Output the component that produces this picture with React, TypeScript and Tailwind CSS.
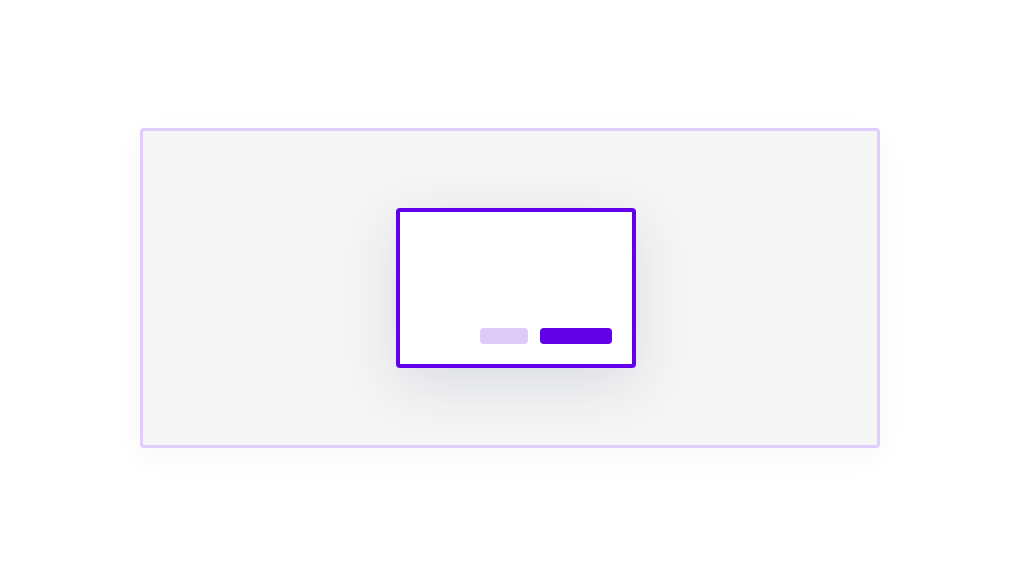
import React from "react";

export default function App() {
  return (
    <div className="w-[1024px] h-[576px] bg-white pt-[128px] pl-[140px]" style={{ fontFamily: '"Liberation Sans", sans-serif' }}>
      <div className="w-[740px] h-[320px] bg-[#f5f5f5] border-[3px] border-[#e0cdfb] rounded-[4px] shadow-[0_8px_30px_rgba(0,0,0,0.04)] flex items-center pl-[253px]">
        <div className="w-[240px] h-[160px] bg-white border-[4px] border-[#6200ea] rounded-[4px] shadow-[0_16px_60px_rgba(30,40,80,0.12)] flex flex-col justify-end items-end pr-[20px] pb-[20px]">
          <div className="flex gap-[12px]">
            <div className="w-[48px] h-[16px] rounded-[4px] bg-[#ddccf8]" />
            <div className="w-[72px] h-[16px] rounded-[4px] bg-[#6200ea]" />
          </div>
        </div>
      </div>
    </div>
  );
}
